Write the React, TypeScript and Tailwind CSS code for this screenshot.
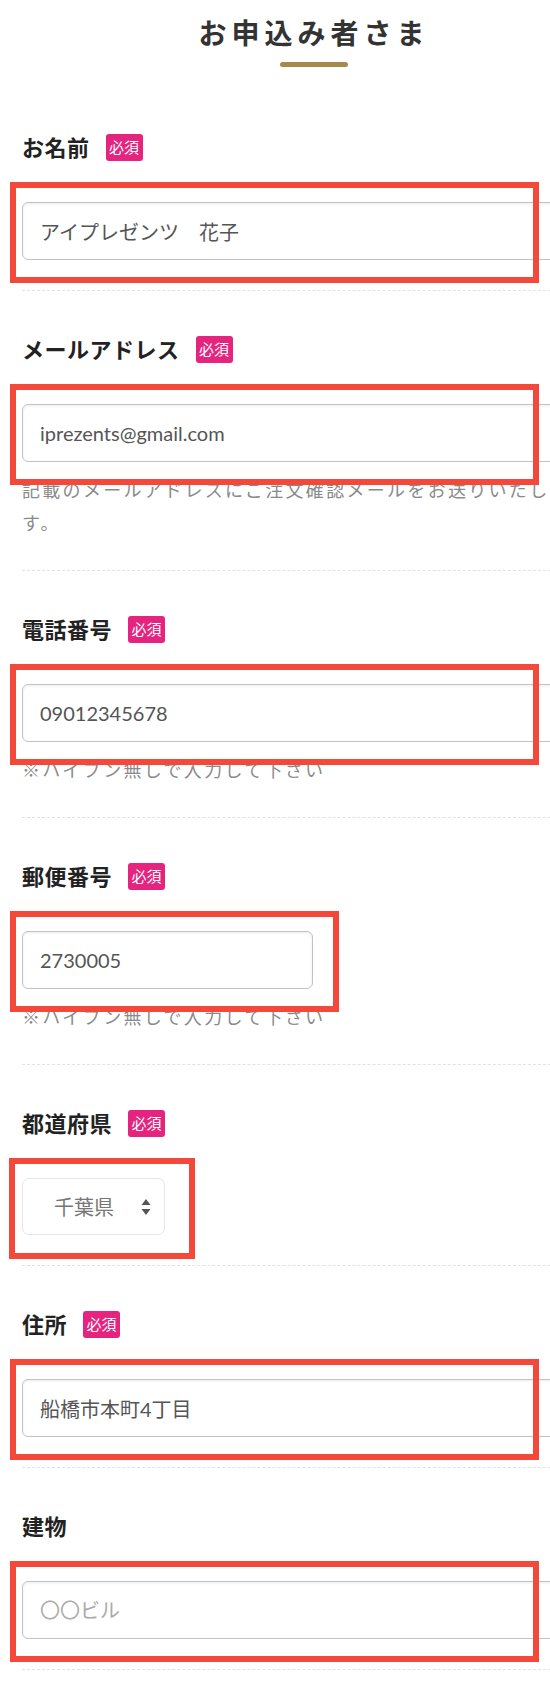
import React from "react";

type Field = {
  key: string;
  label: string;
  required: boolean;
  value?: string;
  placeholder?: string;
  hint?: string;
  kind?: "input" | "select";
  inputWidth?: string;
  boxClass: string;
};

const fields: Field[] = [
  { key: "name", label: "お名前", required: true, value: "アイプレゼンツ　花子", boxClass: "w-[529px] left-[-12px]" },
  {
    key: "email",
    label: "メールアドレス",
    required: true,
    value: "iprezents@gmail.com",
    hint: "記載のメールアドレスにご注文確認メールをお送りいたします。",
    boxClass: "w-[529px] left-[-12px]",
  },
  { key: "tel", label: "電話番号", required: true, value: "09012345678", hint: "※ハイフン無しで入力して下さい", boxClass: "w-[529px] left-[-12px]" },
  {
    key: "zip",
    label: "郵便番号",
    required: true,
    value: "2730005",
    hint: "※ハイフン無しで入力して下さい",
    inputWidth: "w-[291px]",
    boxClass: "w-[329px] left-[-12px]",
  },
  { key: "pref", label: "都道府県", required: true, value: "千葉県", kind: "select", boxClass: "w-[186px] left-[-13px]" },
  { key: "addr", label: "住所", required: true, value: "船橋市本町4丁目", boxClass: "w-[529px] left-[-12px]" },
  { key: "bldg", label: "建物", required: false, placeholder: "〇〇ビル", boxClass: "w-[529px] left-[-12px]" },
];

function Badge() {
  return (
    <span className="flex h-[27px] w-[37px] items-center justify-center rounded-[3px] bg-[#e5247f] text-[15px] leading-none font-normal text-white">
      必須
    </span>
  );
}

function SelectBox({ value }: { value: string }) {
  return (
    <div className="flex h-[57px] w-[143px] items-center rounded-[7px] border border-[#e6e6e6] bg-white pl-[31px] pr-[13px]">
      <span className="flex-1 text-[20px] text-[#777]">{value}</span>
      <svg width="10" height="18" viewBox="0 0 10 18" className="text-[#555]">
        <path d="M5 1 L9.5 7 H0.5 Z" fill="currentColor" />
        <path d="M5 17 L9.5 11 H0.5 Z" fill="currentColor" />
      </svg>
    </div>
  );
}

export default function App() {
  return (
    <div className="w-[550px] overflow-hidden bg-white font-['Lato','Noto_Sans_CJK_JP',sans-serif]">
      <div className="w-[628px] px-[22px] pb-[40px]">
        {/* heading */}
        <div className="pt-[13px] pb-[22px]">
          <h1 className="text-center text-[28px] leading-[40px] font-bold tracking-[5px] text-[#333]">お申込み者さま</h1>
          <div className="mx-auto mt-[9px] h-[5px] w-[68px] rounded-full bg-[#a68a4c]" />
        </div>

        {fields.map((f) => (
          <div key={f.key} className="border-b border-dashed border-[#e2e2e2] pt-[45px] pb-[30px]">
            <div className="flex h-[27px] items-center gap-[16px]">
              <span className="text-[22px] leading-none font-bold tracking-[0.5px] text-[#222]">{f.label}</span>
              {f.required && <Badge />}
            </div>

            <div className="relative mt-[41px] w-fit">
              {f.kind === "select" ? (
                <SelectBox value={f.value ?? ""} />
              ) : (
                <input
                  type="text"
                  readOnly
                  defaultValue={f.value}
                  placeholder={f.placeholder}
                  className={`block h-[58px] ${f.inputWidth ?? "w-[584px]"} rounded-[6px] border border-[#c2c2c2] bg-white pl-[17px] text-[20px] text-[#555] shadow-[inset_0_1px_3px_rgba(0,0,0,0.08)] outline-none placeholder:text-[#aaa]`}
                />
              )}
              {/* annotation frame */}
              <div className={`pointer-events-none absolute -top-[20px] z-10 h-[101px] border-[6px] border-[#f4483a] ${f.boxClass}`} />
            </div>

            {f.hint && (
              <p className="mt-[12px] w-[575px] text-[18px] leading-[33px] tracking-[2.3px] text-[#8a8a8a]">{f.hint}</p>
            )}
          </div>
        ))}
      </div>
    </div>
  );
}
